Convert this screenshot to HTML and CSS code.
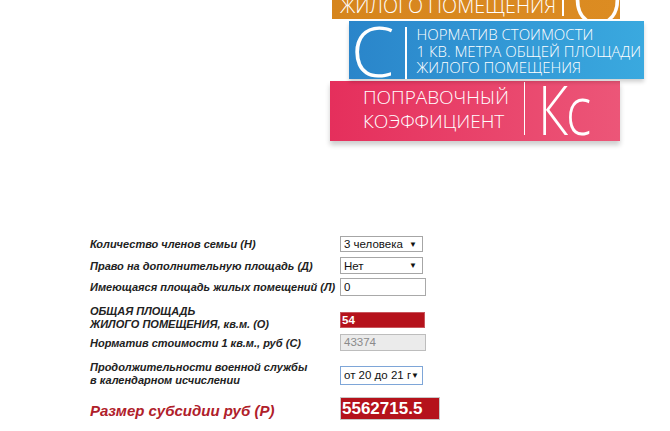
FILE: index.html
```html
<!DOCTYPE html>
<html lang="ru">
<head>
<meta charset="utf-8">
<title>Калькулятор субсидии</title>
<link rel="stylesheet" href="styles.css">
</head>
<body>
<div class="hero">
  <div class="band band-orange">
    <div class="band-text">ОБЩАЯ ПЛОЩАДЬ<br>ЖИЛОГО ПОМЕЩЕНИЯ</div>
    <div class="bar"></div>
    <div class="big big-o">О</div>
  </div>
  <div class="band band-blue">
    <div class="big big-c">С</div>
    <div class="bar"></div>
    <div class="band-text">НОРМАТИВ СТОИМОСТИ<br>1 КВ. МЕТРА ОБЩЕЙ ПЛОЩАДИ<br>ЖИЛОГО ПОМЕЩЕНИЯ</div>
  </div>
  <div class="band band-pink">
    <div class="band-text">ПОПРАВОЧНЫЙ<br>КОЭФФИЦИЕНТ</div>
    <div class="bar"></div>
    <div class="big big-k">Кс</div>
  </div>
</div>

<form class="calc">
  <div class="row r1">
    <label class="lbl">Количество членов семьи (Н)</label>
    <div class="select w83"><span>3 человека</span><span class="arrow">▼</span></div>
  </div>
  <div class="row r2">
    <label class="lbl">Право на дополнительную площадь (Д)</label>
    <div class="select w83 h17"><span>Нет</span><span class="arrow">▼</span></div>
  </div>
  <div class="row r3">
    <label class="lbl">Имеющаяся площадь жилых помещений (Л)</label>
    <div class="field">0</div>
  </div>
  <div class="row r4">
    <label class="lbl lbl-two">ОБЩАЯ ПЛОЩАДЬ<br>ЖИЛОГО ПОМЕЩЕНИЯ, кв.м. (О)</label>
    <div class="field field-red">54</div>
  </div>
  <div class="row r5">
    <label class="lbl">Норматив стоимости 1 кв.м., руб (С)</label>
    <div class="field field-off">43374</div>
  </div>
  <div class="row r6">
    <label class="lbl lbl-two">Продолжительности военной службы<br>в календарном исчислении</label>
    <div class="select select-focus w83 h19"><span class="clip">от 20 до 21 г</span><span class="arrow">▼</span></div>
  </div>
  <div class="row r7">
    <label class="lbl lbl-result">Размер субсидии руб (Р)</label>
    <div class="result">5562715.5</div>
  </div>
</form>
</body>
</html>
```

FILE: styles.css
```css
html, body {
  margin: 0;
  padding: 0;
  background: #ffffff;
}
body {
  width: 670px;
  height: 431px;
  overflow: hidden;
  font-family: "Liberation Sans", Arial, sans-serif;
}

/* ---------- hero graphic ---------- */
.hero {
  height: 236px;
  font-family: "Open Sans", "DejaVu Sans", sans-serif;
  font-weight: 300;
  color: #ffffff;
}
.band {
  display: flex;
  overflow: hidden;
  box-sizing: border-box;
}
.big {
  line-height: 1;
  white-space: nowrap;
}
.bar {
  width: 1.5px;
  background: #ffffff;
  flex: none;
}

.band-orange {
  margin-left: 332px;
  width: 288px;
  height: 19px;
  align-items: flex-end;
  background: linear-gradient(90deg, #d6851d, #dc8c22);
  padding-left: 8px;
}
.band-orange .band-text {
  font-size: 19.7px;
  line-height: 21px;
  margin-bottom: 3px;
  white-space: nowrap;
}
.band-orange .bar {
  height: 16px;
  margin-left: 6px;
  align-self: flex-start;
}
.big-o {
  font-size: 68px;
  margin-left: 8px;
  margin-bottom: -13px;
}

.band-blue {
  margin-left: 349px;
  margin-top: 2px;
  width: 295px;
  height: 58px;
  background: linear-gradient(90deg, #2a85ca, #3aa9df);
  box-shadow: 0 3px 4px rgba(0, 0, 0, 0.18);
  position: relative;
  z-index: 2;
  padding-left: 2px;
}
.big-c {
  font-size: 70px;
  margin-top: -6px;
  width: 50px;
}
.band-blue .bar {
  height: 52px;
  margin-top: 6px;
  margin-left: 4px;
}
.band-blue .band-text {
  font-size: 15px;
  line-height: 16.5px;
  margin-left: 10px;
  margin-top: 5px;
  white-space: nowrap;
}

.band-pink {
  margin-left: 330px;
  margin-top: 2px;
  width: 290px;
  height: 60px;
  background: linear-gradient(90deg, #e52f5c, #ec5678);
  box-shadow: 0 4px 5px rgba(0, 0, 0, 0.2);
  padding-left: 33px;
}
.band-pink .band-text {
  font-size: 19px;
  line-height: 24px;
  margin-top: 4px;
  white-space: nowrap;
}
.band-pink .bar {
  height: 53px;
  margin-top: 1px;
  margin-left: 15px;
}
.big-k {
  font-size: 68px;
  margin-left: 13px;
  margin-top: -6px;
  letter-spacing: -3px;
  transform: scaleX(0.78);
  transform-origin: left center;
}

/* ---------- form ---------- */
.calc {
  margin: 0;
  padding-left: 90px;
}
.row {
  display: grid;
  grid-template-columns: 250px auto;
  align-items: center;
}
.r1 { height: 16px; }
.r2 { height: 17px; margin-top: 5px; }
.r3 { height: 18px; margin-top: 4px; }
.r4 { height: 26px; margin-top: 9px; }
.r5 { height: 17px; margin-top: 3px; }
.r6 { height: 26px; margin-top: 10px; }
.r7 { height: 23px; margin-top: 10px; }

.lbl {
  font-size: 11px;
  font-weight: bold;
  font-style: italic;
  color: #222222;
  white-space: nowrap;
}
.lbl-two {
  line-height: 13px;
}
.lbl-result {
  font-size: 15px;
  color: #b0202a;
  margin-top: 3px;
}

.select {
  box-sizing: border-box;
  height: 16px;
  border: 1px solid #a6a6a6;
  background: #ffffff;
  display: flex;
  align-items: center;
  justify-content: space-between;
  padding: 0 5px 0 3px;
  font-size: 11.5px;
  color: #111111;
  overflow: hidden;
}
.w83 { width: 83px; }
.h17 { height: 17px; }
.h19 { height: 19px; margin-top: 2px; }
.select-focus {
  border-color: #7ea6d8;
  padding-right: 3px;
}
.clip {
  white-space: nowrap;
  overflow: hidden;
  width: 68px;
}
.arrow {
  font-size: 8px;
  color: #111111;
}

.field {
  box-sizing: border-box;
  width: 86px;
  height: 18px;
  border: 1px solid #a9a9a9;
  background: #ffffff;
  font-size: 11.5px;
  line-height: 16px;
  padding-left: 3px;
  color: #111111;
}
.field-red {
  width: 85px;
  height: 16px;
  line-height: 14px;
  margin-top: 4px;
  background: #b5121b;
  border-color: #c9565c;
  color: #ffffff;
  font-weight: bold;
  padding-left: 1px;
}
.field-off {
  height: 17px;
  line-height: 15px;
  background: #ebebeb;
  border-color: #bdbdbd;
  color: #8a8a8a;
}
.result {
  box-sizing: border-box;
  width: 100px;
  height: 23px;
  background: #b5121b;
  border: 1px solid #c8c8c8;
  color: #ffffff;
  font-weight: bold;
  font-size: 17px;
  line-height: 21px;
  padding-left: 1px;
  white-space: nowrap;
}
```
